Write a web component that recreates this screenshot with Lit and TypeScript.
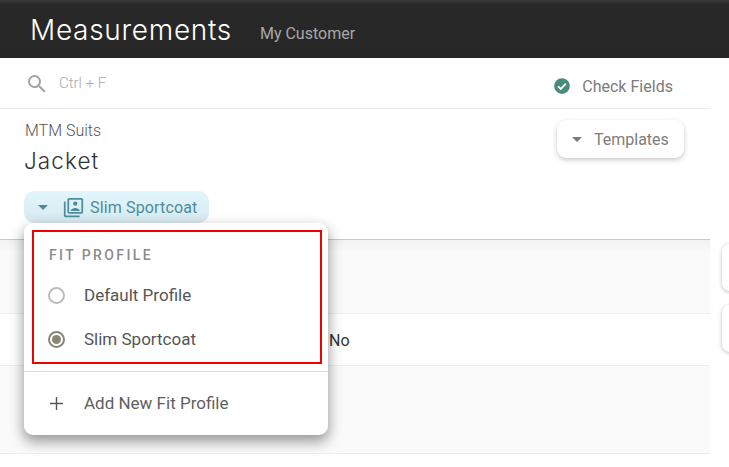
import { LitElement, html, css } from "lit";
import { customElement } from "lit/decorators.js";

@customElement("app-root")
export class AppRoot extends LitElement {
  static styles = css`
    :host { display: block; width: 729px; height: 467px; overflow: hidden; position: relative; background: #fff; font-family: Roboto, sans-serif; color: #333; }
    .topbar { height: 58px; box-sizing: border-box; background: linear-gradient(#3a3a3a 0, #2e2e2e 3px, #282828 5px, #272727 100%); display: flex; align-items: center; padding: 0 0 0 30px; }
    .title { font-family: Inter, sans-serif; font-weight: 300; font-size: 28px; color: #fff; line-height: 1; letter-spacing: 0.7px; padding-top: 1px; }
    .customer { font-size: 16px; color: #a8a8a8; margin-left: 28px; padding-top: 8px; }
    .body { display: flex; }
    .main { width: 710px; flex: none; }
    .side { flex: 1; padding: 186px 0 0 12px; display: flex; flex-direction: column; gap: 14px; }
    .side div { height: 47px; margin-right: -20px; background: #fff; border-radius: 8px; box-shadow: 0 1px 4px rgba(0,0,0,.25); }
    .toolbar { height: 51px; box-sizing: border-box; border-bottom: 1px solid #eaeaea; display: flex; align-items: center; padding: 0 37px 0 25px; }
    .hint { color: #aaa; font-size: 15px; font-weight: 300; margin-left: 10px; margin-top: 0; flex: 1; }
    .check { font-size: 16px; color: #7b7b7b; margin-left: 11px; margin-top: 6px; letter-spacing: 0.02px; }
    .checkicon { margin-top: 5px; }
    .search { margin-top: 1px; }
    .head { height: 131px; box-sizing: border-box; padding: 12px 26px 0 24px; display: flex; justify-content: space-between; border-bottom: 1px solid #c9c9c9; }
    .sub { font-size: 16px; font-weight: 300; color: #555; line-height: 20px; margin-left: 1px; }
    .jacket { font-family: Inter, sans-serif; font-weight: 300; font-size: 22.5px; color: #333; line-height: 30px; margin-top: 5px; letter-spacing: 1.1px; }
    .chip { margin-top: 15px; width: 185px; height: 32px; box-sizing: border-box; border-radius: 10px; background: linear-gradient(#e1f6fc, #d8e9f0); display: flex; align-items: center; padding-left: 7px; color: #4b8d9c; font-size: 16px; letter-spacing: 0.15px; }
    .chip .name { margin-left: 6px; }
    .chip svg.pics { margin-left: 8px; }
    .tpl { margin-top: -1px; width: 127px; height: 38px; box-sizing: border-box; border-radius: 9px; background: #fff; box-shadow: 0 2px 5px rgba(0,0,0,.22); display: flex; align-items: center; padding-left: 8px; color: #7f7c78; font-size: 16px; }
    .tpl span { margin-left: 5px; }
    .row { box-sizing: border-box; border-bottom: 1px solid #eeeeee; display: flex; align-items: center; }
    .r1 { height: 74px; background: linear-gradient(#f2f2f2 0, #fafafa 12px); }
    .r2 { height: 52px; background: #fff; font-size: 16px; color: #333; padding: 2px 0 0 329px; }
    .r3 { height: 88px; background: #fafafa; }
    .menu { position: absolute; left: 24px; top: 223px; width: 304px; height: 212px; box-sizing: border-box; background: #fff; border-radius: 9px; box-shadow: 0 6px 13px 1px rgba(0,0,0,.38); padding: 7px 6px 0 8px; }
    .redbox { height: 134px; box-sizing: border-box; border: 2px solid #f00000; padding: 14px 0 0 14px; }
    .label { font-size: 14px; font-weight: 500; letter-spacing: 2.4px; color: #8b8b8b; line-height: 18px; margin-left: 1px; }
    .opt { display: flex; align-items: center; height: 44px; font-size: 17px; color: #555; }
    .opt.first { margin-top: 9px; }
    .opt span { margin-left: 19px; }
    .radio { width: 17px; height: 17px; box-sizing: border-box; border: 2px solid #bdbdbd; border-radius: 50%; flex: none; display: flex; align-items: center; justify-content: center; }
    .radio.on { border-color: #8a8678; }
    .radio.on i { width: 9px; height: 9px; border-radius: 50%; background: #8a8678; display: block; }
    .divider { height: 1px; background: #dcdcdc; margin: 7px -6px 0 -8px; }
    .add { display: flex; align-items: center; height: 62px; padding-left: 16px; font-size: 17px; color: #5f5f5f; }
    .add span { margin-left: 19px; }
  `;

  caret(color: string) {
    return html`<svg width="24" height="24" viewBox="0 0 24 24"><path d="M7 10l5 5 5-5z" fill=${color}></path></svg>`;
  }

  render() {
    return html`
      <div class="topbar">
        <div class="title">Measurements</div>
        <div class="customer">My Customer</div>
      </div>
      <div class="body">
        <div class="main">
          <div class="toolbar">
            <svg class="search" width="24" height="24" viewBox="0 0 24 24"><path fill="#a3a3a3" d="M15.5 14h-.79l-.28-.27A6.47 6.47 0 0 0 16 9.5 6.5 6.5 0 1 0 9.5 16c1.61 0 3.09-.59 4.23-1.57l.27.28v.79l5 4.99L20.49 19l-4.99-5zm-6 0C7.01 14 5 11.99 5 9.5S7.01 5 9.5 5 14 7.01 14 9.5 11.99 14 9.5 14z"></path></svg>
            <div class="hint">Ctrl + F</div>
            <svg class="checkicon" width="18" height="18" viewBox="0 0 24 24"><path fill="#4a8c7c" d="M12 1.5a10.5 10.5 0 1 0 0 21 10.5 10.5 0 0 0 0-21z"></path><path fill="none" stroke="#fff" stroke-width="2.4" d="M6.8 12.4l3.6 3.5 6.8-7"></path></svg>
            <div class="check">Check Fields</div>
          </div>
          <div class="head">
            <div>
              <div class="sub">MTM Suits</div>
              <div class="jacket">Jacket</div>
              <div class="chip">
                ${this.caret("#4b8d9c")}
                <svg class="pics" width="21" height="21" viewBox="0 0 24 24"><path fill="#4b8d9c" d="M3 5H1v16c0 1.1.9 2 2 2h16v-2H3V5zm18-4H7c-1.1 0-2 .9-2 2v14c0 1.1.9 2 2 2h14c1.1 0 2-.9 2-2V3c0-1.1-.9-2-2-2zm0 16H7V3h14v14zM14 10a2.5 2.5 0 1 0 0-5 2.5 2.5 0 0 0 0 5zm5 5.5c0-1.9-3.3-3-5-3s-5 1.1-5 3v.5h10v-.5z"></path></svg>
                <span class="name">Slim Sportcoat</span>
              </div>
            </div>
            <div class="tpl">
              ${this.caret("#7a7a7a")}
              <span>Templates</span>
            </div>
          </div>
          <div class="row r1"></div>
          <div class="row r2">No</div>
          <div class="row r3"></div>
        </div>
        <div class="side"><div></div><div></div></div>
      </div>
      <div class="menu">
        <div class="redbox">
          <div class="label">FIT PROFILE</div>
          <div class="opt first"><div class="radio"></div><span>Default Profile</span></div>
          <div class="opt"><div class="radio on"><i></i></div><span>Slim Sportcoat</span></div>
        </div>
        <div class="divider"></div>
        <div class="add">
          <svg width="17" height="17" viewBox="0 0 17 17"><path d="M8.5 2v13M2 8.5h13" stroke="#555" stroke-width="1.4" fill="none"></path></svg>
          <span>Add New Fit Profile</span>
        </div>
      </div>
    `;
  }
}
